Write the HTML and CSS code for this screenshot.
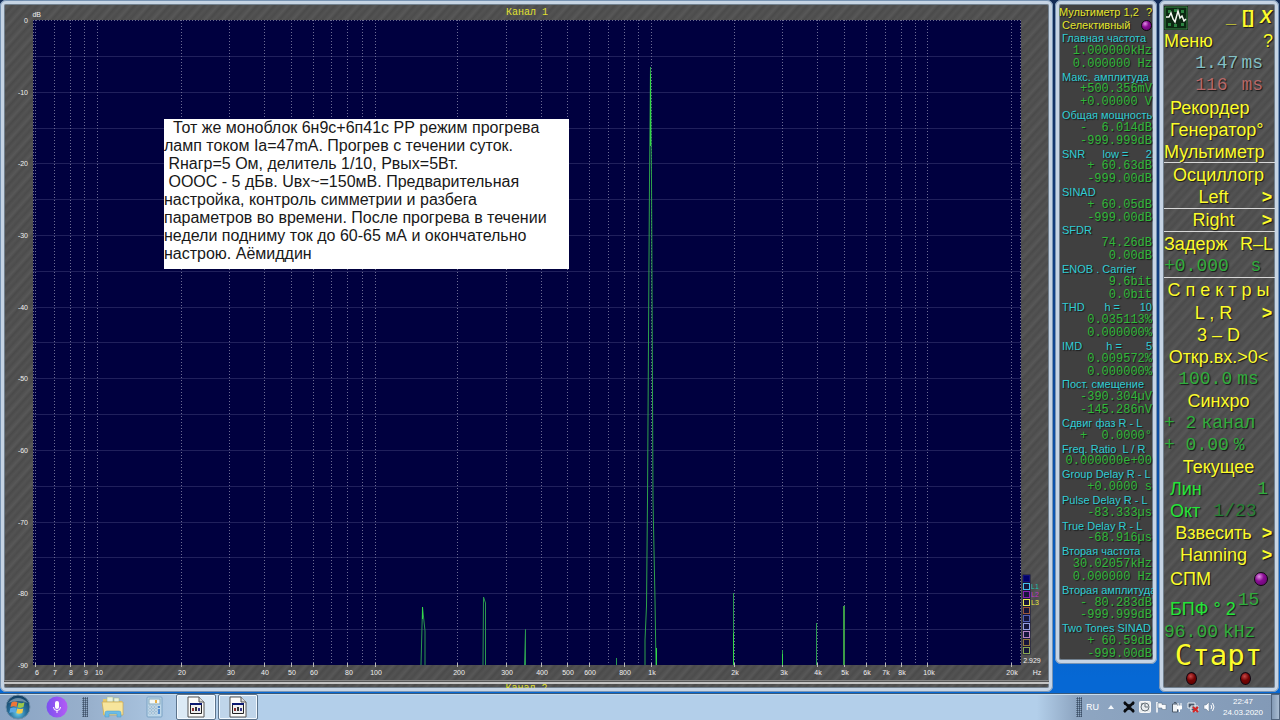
FILE: index.html
```html
<!DOCTYPE html>
<html lang="ru">
<head>
<meta charset="utf-8">
<title>Спектроанализатор</title>
<link rel="stylesheet" href="styles.css">
</head>
<body>
<div class="desktop">
<main class="workspace">
  <section class="window spectrum texture" aria-label="Спектр">
    <div class="chart">
      <svg class="chart-svg" viewBox="4 4 1045 676" role="img" aria-label="Спектр, канал 1">
        <rect x="33" y="20" width="988" height="645" fill="#00003f"/>
        <path class="grid-h" d="M33 56.5H1021M33 92.5H1021M33 128.5H1021M33 163.5H1021M33 199.5H1021M33 235.5H1021M33 271.5H1021M33 307.5H1021M33 342.5H1021M33 378.5H1021M33 414.5H1021M33 450.5H1021M33 486.5H1021M33 522.5H1021M33 557.5H1021M33 593.5H1021M33 629.5H1021"/>
        <path class="grid-v" d="M33.5 20V665M35.5 20V665M54.5 20V665M70.5 20V665M84.5 20V665M97.5 20V665M181.5 20V665M229.5 20V665M264.5 20V665M291.5 20V665M313.5 20V665M331.5 20V665M347.5 20V665M362.5 20V665M375.5 20V665M457.5 20V665M506.5 20V665M541.5 20V665M567.5 20V665M589.5 20V665M608.5 20V665M624.5 20V665M638.5 20V665M651.5 20V665M734.5 20V665M782.5 20V665M817.5 20V665M844.5 20V665M866.5 20V665M885.5 20V665M901.5 20V665M915.5 20V665M927.5 20V665M1011.5 20V665M1020.5 20V665M33 20.5H1021"/>
        <path class="ticks" d="M35.5 663v4M54.5 663v4M70.5 663v4M84.5 663v4M97.5 663v4M181.5 663v4M229.5 663v4M264.5 663v4M291.5 663v4M313.5 663v4M347.5 663v4M375.5 663v4M457.5 663v4M506.5 663v4M541.5 663v4M567.5 663v4M589.5 663v4M624.5 663v4M651.5 663v4M734.5 663v4M782.5 663v4M817.5 663v4M844.5 663v4M866.5 663v4M885.5 663v4M901.5 663v4M927.5 663v4M1011.5 663v4"/>
        <g class="trace">
          <path d="M421 665L422.500 607L425 631V665M483 665L483.500 597L485.500 603V665M524.500 665L525.500 629.500V665M616.500 665V658"/>
          <path class="peak" d="M645 665V640L646.500 606L647.500 500L649.500 180L650.500 67L651.500 180L653 500L655 600L656 665"/>
          <path class="trace-bright" d="M650.500 74V146M656.500 648V665M422.500 607V619"/>
          <path d="M733.500 593V665M782.500 650V665M816.500 623V665"/>
          <path class="trace-wide" d="M844 606V665"/>
          <path class="trace-bright" d="M782.500 654V665M733.500 633V665"/>
        </g>
        <g class="axis" text-anchor="end">
          <text x="28" y="23">0</text><text x="28" y="95">-10</text><text x="28" y="166">-20</text><text x="28" y="238">-30</text><text x="28" y="310">-40</text><text x="28" y="381">-50</text><text x="28" y="453">-60</text><text x="28" y="525">-70</text><text x="28" y="596">-80</text><text x="28" y="668">-90</text>
          <text x="41" y="17">dB</text>
        </g>
        <g class="axis" text-anchor="middle">
          <text x="37" y="675">6</text><text x="55" y="675">7</text><text x="71" y="675">8</text><text x="86" y="675">9</text><text x="99" y="675">10</text><text x="182" y="675">20</text><text x="231" y="675">30</text><text x="265" y="675">40</text><text x="292" y="675">50</text><text x="314" y="675">60</text><text x="349" y="675">80</text><text x="376" y="675">100</text><text x="459" y="675">200</text><text x="507" y="675">300</text><text x="542" y="675">400</text><text x="568" y="675">500</text><text x="590" y="675">600</text><text x="625" y="675">800</text><text x="652" y="675">1k</text><text x="735" y="675">2k</text><text x="784" y="675">3k</text><text x="818" y="675">4k</text><text x="845" y="675">5k</text><text x="867" y="675">6k</text><text x="886" y="675">7k</text><text x="902" y="675">8k</text><text x="929" y="675">10k</text><text x="1012" y="675">20k</text><text x="1037" y="675">Hz</text><text x="1032" y="663">2.929</text>
        </g>
        <text class="channel" x="527" y="15" text-anchor="middle">Канал 1</text>
        <g class="legend">
          <rect x="1022.500" y="574.500" width="8" height="80" fill="#15153a" stroke="none"/>
          <rect x="1023.500" y="575.500" width="6" height="6" fill="#00006a" stroke="#10107a"/>
          <rect x="1023.500" y="583.500" width="6" height="6" stroke="#45c0ee"/>
          <rect x="1023.500" y="591.500" width="6" height="6" stroke="#8a20b0"/>
          <rect x="1023.500" y="599.500" width="6" height="6" stroke="#e8e850"/>
          <rect x="1023.500" y="607.500" width="6" height="6" stroke="#98583c"/>
          <rect x="1023.500" y="615.500" width="6" height="6" stroke="#5262b4"/>
          <rect x="1023.500" y="623.500" width="6" height="6" stroke="#94a0e0"/>
          <rect x="1023.500" y="631.500" width="6" height="6" stroke="#b884c4"/>
          <rect x="1023.500" y="639.500" width="6" height="6" stroke="#94783c"/>
          <rect x="1023.500" y="647.500" width="6" height="6" stroke="#88a850"/>
          <text x="1031" y="589" fill="#20c4b0">L1</text><text x="1031" y="597" fill="#c030c8">L2</text><text x="1031" y="605" fill="#e8e840">L3</text>
        </g>
      </svg>
      <p class="note">  Тот же моноблок 6н9с+6п41с РР режим прогрева
ламп током Ia=47mA. Прогрев с течении суток.
 Rнагр=5 Ом, делитель 1/10, Рвых=5Вт.
 ОООС - 5 дБв. Uвх~=150мВ. Предварительная
настройка, контроль симметрии и разбега
параметров во времени. После прогрева в течении
недели подниму ток до 60-65 мА и окончательно
настрою. Аёмиддин</p>
    </div>
    <div class="splitter"></div>
    <div class="channel-two">Канал 2</div>
  </section>

  <section class="window meter" aria-label="Мультиметр">
    <div class="m-title"><span>Мультиметр 1,2</span><button>?</button></div>
    <div class="m-mode"><button>Селективный</button><i class="led violet"></i></div>
    <div class="m-label">Главная частота</div><div class="m-val">1.000000<b>kHz</b></div><div class="m-val">0.000000 <b>Hz</b></div>
    <div class="m-label">Макс. амплитуда</div><div class="m-val">+500.356<b>mV</b></div><div class="m-val">+0.00000 <b>V</b></div>
    <div class="m-label">Общая мощность</div><div class="m-val">-  6.014<b>dB</b></div><div class="m-val">-999.999<b>dB</b></div>
    <div class="m-label m-split"><span>SNR</span><span>low =</span><span>2</span></div><div class="m-val">+ 60.63<b>dB</b></div><div class="m-val">-999.00<b>dB</b></div>
    <div class="m-label">SINAD</div><div class="m-val">+ 60.05<b>dB</b></div><div class="m-val">-999.00<b>dB</b></div>
    <div class="m-label">SFDR</div><div class="m-val">74.26<b>dB</b></div><div class="m-val">0.00<b>dB</b></div>
    <div class="m-label">ENOB . Carrier</div><div class="m-val">9.6<b>bit</b></div><div class="m-val">0.0<b>bit</b></div>
    <div class="m-label m-split"><span>THD</span><span>h =</span><span>10</span></div><div class="m-val">0.035113<b>%</b></div><div class="m-val">0.000000<b>%</b></div>
    <div class="m-label m-split"><span>IMD</span><span>h =</span><span>5</span></div><div class="m-val">0.009572<b>%</b></div><div class="m-val">0.000000<b>%</b></div>
    <div class="m-label">Пост. смещение</div><div class="m-val">-390.304<b>µV</b></div><div class="m-val">-145.286<b>nV</b></div>
    <div class="m-label">Сдвиг фаз R - L</div><div class="m-val">+  0.0000<b>°</b></div>
    <div class="m-label">Freq. Ratio  L / R</div><div class="m-val">0.000000e+00</div>
    <div class="m-label">Group Delay R - L</div><div class="m-val">+0.0000 <b>s</b></div>
    <div class="m-label">Pulse Delay R - L</div><div class="m-val">-83.333<b>µs</b></div>
    <div class="m-label">True Delay R - L</div><div class="m-val">-68.916<b>µs</b></div>
    <div class="m-label">Вторая частота</div><div class="m-val">30.02057<b>kHz</b></div><div class="m-val">0.000000 <b>Hz</b></div>
    <div class="m-label">Вторая амплитуда</div><div class="m-val">- 80.283<b>dB</b></div><div class="m-val">-999.999<b>dB</b></div>
    <div class="m-label">Two Tones SINAD</div><div class="m-val">+ 60.59<b>dB</b></div><div class="m-val">-999.00<b>dB</b></div>
  </section>

  <section class="window control texture" aria-label="Управление">
    <header class="c-head">
      <svg class="app-icon" viewBox="0 0 24 24" aria-hidden="true"><rect width="24" height="24" fill="#061208"/><rect x="1" y="1" width="22" height="22" fill="#0c2812" stroke="#3e8c4a" stroke-width="1"/><path d="M4 4h3v3h-3zM10 3h3v3h-3zM17 4h3v3h-3zM4 17h3v3h-3zM10 18h3v3h-3zM17 17h3v3h-3z" fill="#2c8440"/><path d="M2 11h3l2-4 2 6 2 3 3-11 2 7 2-2 2 5 2-2" fill="none" stroke="#f4f8f0" stroke-width="1.500"/></svg>
      <span class="win-buttons"><button>_</button><button>[]</button><button class="close">X</button></span>
    </header>
    <div class="row between"><button>Меню</button><button>?</button></div>
    <div class="row mono end blue"><span>1.47</span><span>ms</span></div>
    <div class="row mono end red"><span>116 </span><span>ms</span></div>
    <div class="row tall inset"><button>Рекордер</button></div>
    <div class="row inset"><button>Генератор°</button></div>
    <div class="row ruled"><button>Мультиметр</button></div>
    <div class="row tall center"><button>Осциллогр</button></div>
    <div class="row tall ruled arrow"><button>Left</button><button>&gt;</button></div>
    <div class="row tall ruled arrow"><button>Right</button><button>&gt;</button></div>
    <div class="row tall between"><button>Задерж</button><button>R–L</button></div>
    <div class="row tall ruled mono"><span>+0.000  s</span></div>
    <div class="row tall center"><button>С п е к т р ы</button></div>
    <div class="row tall arrow"><button>L , R</button><button>&gt;</button></div>
    <div class="row center"><button>3 – D</button></div>
    <div class="row center"><button>Откр.вх.&gt;0&lt;</button></div>
    <div class="row mono center"><span>100.0</span><span class="unit">ms</span></div>
    <div class="row center"><button>Синхро</button></div>
    <div class="row mono"><span>+ 2</span><span class="unit">канал</span></div>
    <div class="row mono"><span>+ 0.00</span><span class="unit">%</span></div>
    <div class="row center"><button>Текущее</button></div>
    <div class="row inset between lime lin"><button>Лин</button><span class="mono">1</span></div>
    <div class="row inset lime"><button>Окт</button><span class="mono dark">1/23</span></div>
    <div class="row arrow"><button>Взвесить</button><button>&gt;</button></div>
    <div class="row arrow"><button>Hanning</button><button>&gt;</button></div>
    <div class="row led-row inset between"><button>СПМ</button><i class="led violet"></i></div>
    <div class="row fft inset lime"><button>БПФ ° 2</button><sup class="mono">15</sup></div>
    <div class="row mono"><span>96.00</span><span class="unit">kHz</span></div>
    <div class="row start center"><button>Старт</button></div>
    <div class="row lamps"><i class="led dark-red"></i><i class="led dark-red"></i></div>
  </section>
</main>

<footer class="taskbar">
  <button class="tb orb" aria-label="Пуск">
    <svg viewBox="0 0 26 26"><defs><radialGradient id="orb" cx=".5" cy=".75" r=".75"><stop offset="0" stop-color="#6ad0ec"/><stop offset=".45" stop-color="#276f9c"/><stop offset="1" stop-color="#123a5c"/></radialGradient></defs><circle cx="13" cy="13" r="12" fill="url(#orb)" stroke="#6e8ea8"/><path d="M6.500 8.500q3-2 6-.4l-1 4.800q-3-1.200-6 .2z" fill="#ee7636"/><path d="M13.500 8.500q3 1.400 6-.2l-1 4.800q-3 1.500-6 .1z" fill="#9cc84a"/><path d="M5.300 14.200q3-1.300 6-.2l-1 4.800q-3-1.300-6 .2z" fill="#58a8e4"/><path d="M12.300 14.400q3 1.400 6 0l-1 4.600q-3 1.500-6 .1z" fill="#f8cc48"/><path d="M3 9q10-10 20 0q-10-4-20 0z" fill="#fff" opacity=".35"/></svg>
  </button>
  <button class="tb mic" aria-label="Голос">
    <svg viewBox="0 0 22 22"><defs><linearGradient id="mic"><stop stop-color="#7a50f0"/><stop offset="1" stop-color="#b45cf4"/></linearGradient></defs><circle cx="11" cy="11" r="10.500" fill="url(#mic)"/><rect x="9" y="5" width="4" height="8" rx="2" fill="#fff"/><path d="M7.500 11a3.500 3.500 0 0 0 7 0M11 14.500V17" fill="none" stroke="#fff" stroke-width="1"/></svg>
  </button>
  <i class="grip"></i>
  <button class="tb folder" aria-label="Проводник">
    <svg viewBox="0 0 24 22"><path d="M2 3h6l1 2h12v14H2z" fill="#e6c768"/><path d="M6 1h6v5H6zM13 2h5v4h-5z" fill="#e8f0dc" stroke="#a8b878" stroke-width=".5"/><path d="M1 6h21v13H3z" fill="#f7e59c" stroke="#c8a850" stroke-width=".7"/><path d="M4 21v-4q0-2 2-2h12q2 0 2 2v4h-4v-3H8v3z" fill="#6cbce6" stroke="#4c98c8" stroke-width=".5"/></svg>
  </button>
  <button class="tb calc" aria-label="Калькулятор">
    <svg viewBox="0 0 17 22"><rect x="1" y="1" width="15" height="20" rx="1" fill="#bed8ea" stroke="#7aa2c4"/><rect x="3" y="3" width="11" height="5" fill="#f4f8f8" stroke="#8ab"/><path d="M9 4h2v3H9z" fill="#e8b048"/><path d="M3 10h2v2H3zM6 10h2v2H6zM9 10h2v2H9zM3 13h2v2H3zM6 13h2v2H6zM9 13h2v2H9zM3 16h2v2H3zM6 16h2v2H6zM9 16h2v2H9z" fill="#f4faff" stroke="#7a9cb8" stroke-width=".5"/><path d="M12 10h2v2h-2zM12 13h2v5h-2z" fill="#568ed0"/></svg>
  </button>
  <button class="tb task" aria-label="Анализатор">
    <svg viewBox="0 0 18 22"><path d="M1 1h11l5 5v15H1z" fill="#fcfcfa" stroke="#555"/><path d="M12 1v5h5" fill="#ddd" stroke="#555"/><path d="M3.500 7.500h11v10h-11z" fill="#eee" stroke="#222"/><path d="M3 7h12v2H3z" fill="#0a1870"/><path d="M5 12h2v3H5z" fill="#833"/><path d="M8 11h2v4H8z" fill="#333"/><path d="M11 12h2v3h-2z" fill="#338"/></svg>
  </button>
  <button class="tb task second" aria-label="Мультиметр">
    <svg viewBox="0 0 18 22"><path d="M1 1h11l5 5v15H1z" fill="#fcfcfa" stroke="#555"/><path d="M12 1v5h5" fill="#ddd" stroke="#555"/><path d="M3.500 7.500h11v10h-11z" fill="#eee" stroke="#222"/><path d="M3 7h12v2H3z" fill="#0a1870"/><path d="M5 12h2v3H5z" fill="#833"/><path d="M8 11h2v4H8z" fill="#333"/><path d="M11 12h2v3h-2z" fill="#338"/></svg>
  </button>
  <div class="tray">
    <i class="grip"></i>
    <button class="lang">RU</button>
    <svg class="up" viewBox="0 0 6 4"><path d="M3 0l3 4H0z" fill="#f4f8fc"/></svg>
    <svg viewBox="0 0 12 12"><path d="M1 1l10 10M11 1L1 11" stroke="#0a0c10" stroke-width="2.500"/><path d="M1 3h3M8 3h3M1 9h3M8 9h3M6 3v6" stroke="#0a0c10" stroke-width="1.500"/></svg>
    <svg viewBox="0 0 12 12"><rect x=".5" y=".5" width="11" height="11" rx="1" fill="#e8ecee" stroke="#f8f8f8"/><circle cx="6" cy="6" r="4" fill="none" stroke="#667078"/><path d="M6 3v3h3M2 3h2" stroke="#667078" fill="none"/></svg>
    <svg viewBox="0 0 12 12"><path d="M2 1v10.500" stroke="#fff" stroke-width="1.500"/><path d="M3 2h4v1.500h4v5H7V7H3z" fill="#f8fafc" stroke="#56687c" stroke-width=".5"/></svg>
    <svg viewBox="0 0 12 12"><path d="M1.500 3h5v8h-5zM3 1.500h2V3" fill="#eef2f6" stroke="#4c5a6a"/><path d="M7 2v3M10 2v3M6.500 5h4v3h-4zM8.500 8v3" fill="#fff" stroke="#fff"/></svg>
    <svg viewBox="0 0 12 12"><path d="M1 2h7v5H1zM4 5h7v5H4z" fill="#46566a" stroke="#eef4f8"/><path d="M6 6l5 5M11 6l-5 5" stroke="#d42424" stroke-width="2"/></svg>
    <svg viewBox="0 0 12 12"><path d="M1 4h2l3-3v10L3 8H1z" fill="#fafcff" stroke="#65788c" stroke-width=".5"/><path d="M8 4q1.500 2 0 4M9.500 2q3 4 0 8" fill="none" stroke="#fff"/></svg>
    <time class="clock">22:47<br>24.03.2020</time>
    <button class="show-desktop" aria-label="Показать рабочий стол"></button>
  </div>
</footer>
</div>
</body>
</html>
```
FILE: styles.css
```css
* { box-sizing: border-box; }
body { margin: 0; font-family: "Liberation Sans", Arial, sans-serif; }
button { margin: 0; padding: 0; border: 0; background: none; color: inherit; font: inherit; line-height: inherit; text-shadow: inherit; white-space: pre; }

.desktop { display: flex; flex-direction: column; min-height: 100vh; background: linear-gradient(#132c56, #123a78 30%, #0c50a8 65%, #0668d4 94%); }
.workspace { display: flex; flex: 1; gap: 2px; padding: 0 1px 1px 0; min-height: 0; }
.window { border: 4px solid #c6d4e4; border-radius: 6px; box-shadow: inset 0 0 0 1px #71808e; background-color: #404040; overflow: hidden; outline: 1px solid #7894b4; outline-offset: -1px; }
.texture { background-image: repeating-linear-gradient(132deg, #4c4c4c 0, #585858 4px, #4a4a4a 7px, #535353 10px, #4c4c4c 13px); }

.spectrum { display: flex; flex: 1; flex-direction: column; min-width: 0; }
.chart { position: relative; flex: 1; min-height: 0; }
.chart-svg { display: block; width: 100%; height: 100%; }
.grid-h { stroke: #20205c; }
.grid-v { fill: none; stroke: #6c6c94; stroke-dasharray: 1 2; }
.ticks { stroke: #b8b8b8; }
.trace { fill: none; stroke: #2a9850; stroke-width: 1; }
.peak { stroke: #2ea04c; }
.trace-bright { stroke: #34d848; }
.trace-wide { stroke: #3c9c48; stroke-width: 2; }
.axis { font-size: 7px; fill: #f0f0f0; }
.channel, .channel-two { font-family: "Liberation Mono", "Courier New", monospace; font-size: 10px; fill: #e0e030; color: #e0e030; }
.legend { fill: none; font-size: 7px; }
.note { position: absolute; left: 160px; top: 115px; width: 405px; margin: 0; padding-bottom: 6px; background: #fff; color: #181818; font-size: 16px; line-height: 18px; white-space: pre; }
.splitter { height: 4px; border-top: 1px solid #888; border-bottom: 2px solid #c4c4c4; background: #555; }
.channel-two { height: 4px; line-height: 9px; text-align: center; overflow: hidden; }

.meter { display: flex; flex-direction: column; width: 102px; margin-bottom: 28px; padding: 2px 0 0; font-size: 11px; color: #30ccd4; text-shadow: 1px 1px 1px #181818; }
.meter > div { display: flex; flex: 1 0 0; align-items: center; min-height: 0; padding: 0 1px 0 3px; line-height: 12px; white-space: pre; }
.meter > .m-title, .meter > .m-mode { justify-content: space-between; color: #e4e42c; }
.meter > .m-title { padding-left: 0; }
.m-split { justify-content: space-between; }
.meter > .m-val { justify-content: flex-end; color: #30b83a; font-family: "Liberation Mono", "Courier New", monospace; font-size: 12px; }
.m-val b { font-weight: normal; }

.led { display: inline-block; width: 11px; height: 11px; border: 1px solid #100410; border-radius: 50%; }
.violet { background: radial-gradient(circle at 35% 30%, #e090e4, #8a0c94 40%, #5c0468); }
.dark-red { height: 13px; background: radial-gradient(circle at 40% 30%, #c84848, #740404 45%, #580000); }

.control { display: flex; flex-direction: column; width: 120px; padding: 1px 0 0 1px; color: #fcfc2c; font-size: 18px; text-shadow: 1px 1px 1px #181818; }
.control .led { margin-right: 5px; width: 14px; height: 14px; }
.c-head { display: flex; align-items: center; justify-content: space-between; height: 25px; padding-right: 3px; }
.app-icon { width: 24px; height: 24px; }
.win-buttons { display: flex; gap: 6px; font-weight: bold; font-size: 18px; }
.close { font-style: italic; }
.row { display: flex; align-items: center; height: 22px; padding: 0 2px 0 0; line-height: 20px; white-space: pre; }
.tall { height: 23px; }
.ruled { border-bottom: 1px solid #d8d8d8; }
.inset { padding-left: 6px; }
.between { justify-content: space-between; }
.center { justify-content: center; }
.end { justify-content: flex-end; gap: 3px; padding-right: 12px; }
.arrow { display: grid; grid-template-columns: 2px 1fr 12px; }
.arrow button:first-child { grid-column: 2; }
.arrow button:last-child { font-weight: bold; }
.mono { font-family: "Liberation Mono", "Courier New", monospace; color: #30ac3e; }
.blue { color: #84c0c4; }
.red { color: #b86868; }
.unit { margin-left: 5px; }
.lime { color: #24e43a; gap: 13px; }
.lin { padding-right: 7px; }
.dark { color: #268036; }
.led-row { height: 26px; }
.fft { height: 29px; gap: 2px; padding-top: 4px; }
.fft sup { align-self: flex-start; font-size: 18px; line-height: 8px; }
.start { height: 25px; font-family: "DejaVu Sans Mono", monospace; font-size: 29px; line-height: 25px; }
.lamps { justify-content: space-around; height: 20px; }
.control .lamps .led { margin: 0; width: 11px; height: 13px; }

.taskbar { display: flex; align-items: center; height: 27px; border-top: 1px solid #38587a; background: linear-gradient(90deg, #8aa4c4, #98b0cc 7%, #b3cfea 15%, #b3cfea 81%, #8ea6c2 84%, #8299b6); box-shadow: inset 0 1px #c8dcec; }
.tb { display: flex; align-items: center; justify-content: center; height: 26px; }
.tb svg { height: 22px; }
.orb { width: 35px; }
.orb svg { height: 26px; }
.mic { width: 44px; }
.grip { width: 6px; height: 20px; margin: 0 3px; background: repeating-linear-gradient(90deg, transparent 0 1px, #65788e 1px 2px), repeating-linear-gradient(#94acc6 0 1px, #50647a 1px 2px); background-blend-mode: multiply; opacity: 0.7; }
.folder { width: 44px; }
.calc { width: 39px; }
.task { width: 40px; margin-left: 2px; border: 1px solid #5c748c; border-radius: 2px; background: #dceaf5; box-shadow: inset 0 0 0 1px #f4faff; }
.second { background: #bfd5ea; }
.tray { display: flex; align-items: center; gap: 4px; margin-left: auto; height: 26px; color: #fff; }
.tray > svg { width: 12px; height: 12px; }
.tray .up { width: 6px; height: 4px; margin: 0 5px; }
.tray .grip { margin: 0; }
.lang { font-size: 9px; }
.clock { margin: 0 4px; font-size: 8px; line-height: 11px; text-align: center; }
.show-desktop { width: 9px; height: 26px; border: 1px solid #52667e; background: linear-gradient(90deg, #8299b4, #aabdd2); }
```
